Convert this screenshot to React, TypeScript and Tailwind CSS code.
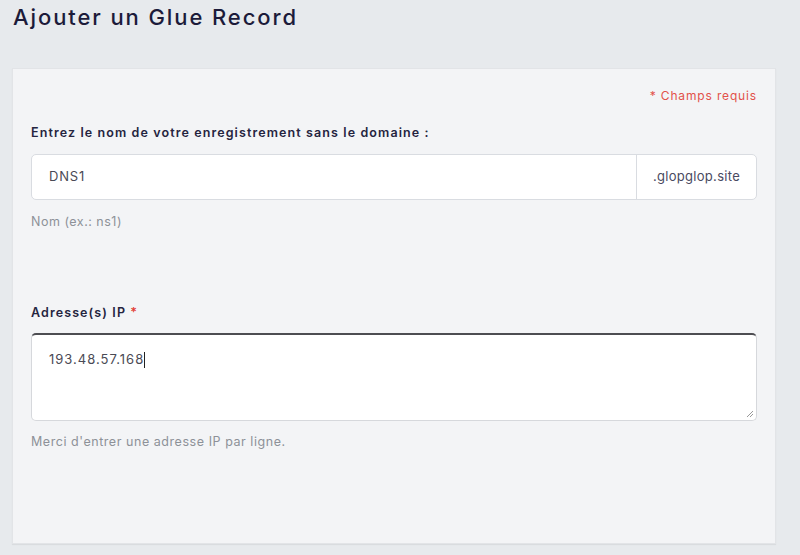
import React from 'react';

const font = { fontFamily: 'Inter, "Noto Sans", sans-serif' };

export default function App() {
  return (
    <div className="w-[800px] h-[555px] bg-[#e7eaed] overflow-hidden" style={font}>
      <h1 className="pl-[13px] pt-[1px] h-[68px] text-[22px] font-medium text-[#1c1b3a] tracking-[1.9px]">
        Ajouter un Glue Record
      </h1>
      <div className="ml-[12px] w-[764px] h-[476px] bg-[#f3f4f6] border border-[#e2e4e7] shadow-[0_1px_1px_rgba(0,0,0,0.06)] px-[18px]">
        <div className="flex justify-end pt-[18px] text-[12px] text-[#e2514a] tracking-[0.85px]">* Champs requis</div>
        <div className="mt-[19px] text-[12.5px] font-semibold text-[#25243f] tracking-[1.1px]">
          Entrez le nom de votre enregistrement sans le domaine :
        </div>
        <div className="mt-[11px] flex h-[46px] border border-[#d9dce1] rounded-[5px] bg-white overflow-hidden">
          <div className="flex-1 flex items-center pl-[17px] text-[13px] text-[#4a4a55] tracking-[0.8px]">DNS1</div>
          <div className="w-[120px] flex items-center justify-center border-l border-[#d9dce1] text-[13px] text-[#4a4a5f] tracking-[0.3px]">
            .glopglop.site
          </div>
        </div>
        <div className="mt-[13px] text-[12.5px] text-[#8d9198] tracking-[0.5px]">Nom (ex.: ns1)</div>
        <div className="mt-[72px] text-[12.5px] font-semibold text-[#25243f] tracking-[1.1px]">
          Adresse(s) IP <span className="text-[#e23b34]">*</span>
        </div>
        <div className="relative mt-[11px] h-[88px] bg-white rounded-[5px] border border-[#d6d8dc] border-t-2 border-t-[#4d4d52]">
          <div className="pl-[17px] pt-[15px] text-[13px] text-[#4a4a55] tracking-[1px] flex items-center">
            193.48.57.168<span className="inline-block w-px h-[16px] bg-[#222]" />
          </div>
          <svg className="absolute right-[2px] bottom-[2px]" width="9" height="9" viewBox="0 0 9 9">
            <path d="M8 2L2 8M8 5L5 8" stroke="#999" strokeWidth="1" />
          </svg>
        </div>
        <div className="mt-[12px] text-[12.5px] text-[#8d9198] tracking-[0.55px]">Merci d'entrer une adresse IP par ligne.</div>
      </div>
    </div>
  );
}
